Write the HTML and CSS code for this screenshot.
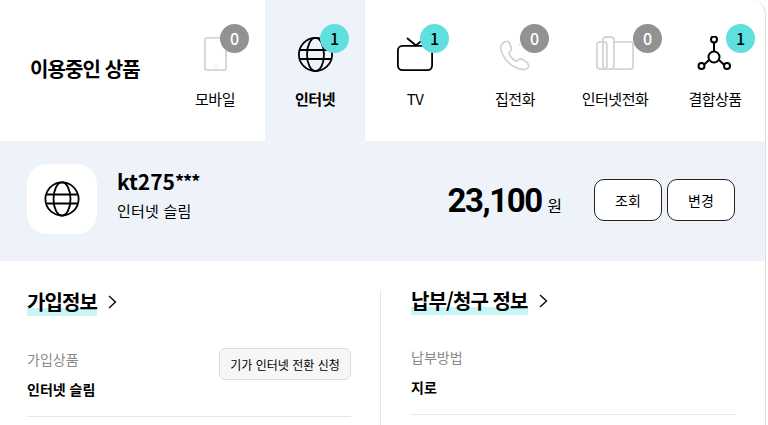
FILE: index.html
```html
<!DOCTYPE html>
<html lang="ko">
<head>
  <meta charset="UTF-8">
  <title>이용중인 상품</title>
  <link rel="stylesheet" href="styles.css">
</head>
<body>
  <div class="page">
    <div class="product-bar">
      <h2 class="bar-title">이용중인 상품</h2>
      <ul class="product-tabs">
        <li class="tab">
          <div class="tab-icon">
            <svg width="36" height="36" viewBox="0 0 36 36" fill="none" stroke="#d4d4d4" stroke-width="1.800"><rect x="7.900" y="1.900" width="21.200" height="32.200" rx="2"/><circle cx="19" cy="30" r=".8" fill="#bcdde6" stroke="none"/></svg>
            <span class="count">0</span>
          </div>
          <span class="tab-label">모바일</span>
        </li>
        <li class="tab active">
          <div class="tab-icon">
            <svg width="36" height="36" viewBox="0 0 36 36" fill="none" stroke="#000" stroke-width="1.800"><circle cx="18.500" cy="18.500" r="16.600"/><ellipse cx="18.500" cy="18.500" rx="8.500" ry="16.600"/><path d="M3 14h31M3 23h31"/></svg>
            <span class="count on">1</span>
          </div>
          <span class="tab-label">인터넷</span>
        </li>
        <li class="tab">
          <div class="tab-icon">
            <svg width="38" height="36" viewBox="0 0 38 36" fill="none" stroke="#000" stroke-width="1.800"><rect x="1.900" y="9.900" width="34.200" height="24.200" rx="4.500"/><path d="M11 2l9 7.500 7-6"/></svg>
            <span class="count on">1</span>
          </div>
          <span class="tab-label">TV</span>
        </li>
        <li class="tab">
          <div class="tab-icon">
            <svg width="36" height="36" viewBox="0 0 36 36" fill="none" stroke="#d4d4d4" stroke-width="1.800"><g transform="translate(3 4)"><path d="M8 1.500C6 1 4 2 2.500 3.500C0 6 .5 11 4 17C9 25 17 29.500 24 29.500C27 29.500 29 27.500 28.500 25C28 23 26 21.500 23.500 20C21 18.500 19 18.500 17.500 20.500C16.500 21.500 15 21 13 19C10.500 16.500 8.500 14 9 12.500C11 11 12 9.500 11 7.500C10.500 5 9.500 2.500 8 1.500Z"/><circle cx="19.500" cy="5" r=".8" fill="#d4d4d4" stroke="none"/></g></svg>
            <span class="count">0</span>
          </div>
          <span class="tab-label">집전화</span>
        </li>
        <li class="tab">
          <div class="tab-icon">
            <svg width="40" height="36" viewBox="0 0 40 36" fill="none" stroke="#d4d4d4" stroke-width="1.800"><rect x="1.900" y="5.900" width="10" height="27.200" rx="3"/><rect x="7.900" y="1" width="11" height="32.100" rx="3"/><path d="M18.900 5.900h16.200a3 3 0 0 1 3 3v21.200a3 3 0 0 1-3 3h-16.200"/></svg>
            <span class="count far">0</span>
          </div>
          <span class="tab-label">인터넷전화</span>
        </li>
        <li class="tab">
          <div class="tab-icon">
            <svg width="36" height="36" viewBox="0 0 36 36" fill="none" stroke="#000" stroke-width="2"><circle cx="17" cy="21" r="5.500"/><circle cx="17" cy="3.500" r="3"/><circle cx="4.500" cy="30" r="3"/><circle cx="30" cy="30" r="3"/><path d="M17 6.500v9M7.200 28.500l5.100-4.700M26.800 28.500l-5.100-4.700"/></svg>
            <span class="count on mid">1</span>
          </div>
          <span class="tab-label">결합상품</span>
        </li>
      </ul>
    </div>

    <div class="summary">
      <div class="summary-icon">
        <svg width="36" height="36" viewBox="0 0 36 36" fill="none" stroke="#000" stroke-width="1.800"><circle cx="18" cy="18" r="16.600"/><ellipse cx="18" cy="18" rx="8.500" ry="16.600"/><path d="M3 13.500h30M3 22.500h30"/></svg>
      </div>
      <div class="summary-name">
        <strong>kt275<i>***</i></strong>
        <span>인터넷 슬림</span>
      </div>
      <div class="summary-price"><b>23,100</b> <span>원</span></div>
      <div class="summary-btns">
        <button class="btn">조회</button>
        <button class="btn">변경</button>
      </div>
    </div>

    <div class="info">
      <section class="info-col left">
        <h3 class="info-title"><span>가입정보</span>
          <svg width="9" height="14" viewBox="0 0 9 14" fill="none" stroke="#000" stroke-width="1.300"><path d="M1 1l6.500 6L1 13"/></svg>
        </h3>
        <div class="info-row">
          <div>
            <div class="info-label">가입상품</div>
            <div class="info-value">인터넷 슬림</div>
          </div>
          <button class="small-btn">기가 인터넷 전환 신청</button>
        </div>
      </section>
      <section class="info-col right">
        <h3 class="info-title"><span>납부/청구 정보</span>
          <svg width="9" height="14" viewBox="0 0 9 14" fill="none" stroke="#000" stroke-width="1.300"><path d="M1 1l6.500 6L1 13"/></svg>
        </h3>
        <div class="info-row">
          <div>
            <div class="info-label">납부방법</div>
            <div class="info-value">지로</div>
          </div>
        </div>
      </section>
    </div>
  </div>
</body>
</html>
```

FILE: styles.css
```css
* {
  box-sizing: border-box;
}

html, body {
  height: 425px;
  overflow: hidden;
}

body {
  margin: 0;
  background-color: #ffffff;
  color: #000;
  font-family: "Noto Sans CJK KR", "Noto Sans", sans-serif;
}

.page {
  width: 766px;
  height: 425px;
  border-right: 1px solid #dedede;
  border-top-right-radius: 14px;
  overflow: hidden;
}

.product-bar {
  display: flex;
  height: 141px;
  padding-left: 30px;
}

.bar-title {
  margin: 0;
  width: 135px;
  font-size: 20px;
  font-weight: 700;
  line-height: 137px;
  letter-spacing: -0.9px;
  white-space: nowrap;
}

.product-tabs {
  display: flex;
  margin: 0;
  padding: 0;
  list-style: none;
}

.tab {
  display: flex;
  flex-direction: column;
  align-items: center;
  width: 100px;
  padding-top: 36px;
}

.tab.active {
  background-color: #eef3fa;
}

.tab.active .tab-label {
  font-weight: 700;
}

.tab-icon {
  position: relative;
  display: flex;
  justify-content: center;
  height: 36px;
  margin-bottom: 17px;
}

.count {
  position: absolute;
  left: calc(50% + 5px);
  top: -12px;
  width: 29px;
  height: 29px;
  border-radius: 50%;
  background-color: #929292;
  color: #fff;
  font-size: 16px;
  font-weight: 500;
  line-height: 28px;
  text-align: center;
}

.count.on {
  background-color: #5ee0de;
  color: #000;
}

.count.far {
  left: calc(50% + 18px);
}

.count.mid {
  left: calc(50% + 11px);
}

.tab-label {
  font-size: 15px;
  line-height: 20px;
  letter-spacing: -0.5px;
  white-space: nowrap;
}

.summary {
  display: flex;
  align-items: center;
  height: 120px;
  padding: 0 30px 4px 27px;
  background-color: #eef3fa;
}

.summary-icon {
  display: flex;
  align-items: center;
  justify-content: center;
  width: 70px;
  height: 70px;
  margin-right: 20px;
  border-radius: 20px;
  background-color: #fff;
}

.summary-name {
  display: flex;
  flex-direction: column;
  flex: 1;
}

.summary-name strong {
  font-size: 21px;
  font-weight: 700;
  line-height: 24px;
}

.summary-name strong i {
  font-size: 18px;
  font-style: normal;
  letter-spacing: -1px;
  vertical-align: 1px;
}

.summary-name span {
  font-size: 15px;
  line-height: 36px;
  letter-spacing: 0.2px;
}

.summary-price {
  margin: 2px 32px 0 0;
}

.summary-price b {
  font-family: "Roboto", sans-serif;
  font-size: 33px;
  font-weight: 700;
  letter-spacing: -1.4px;
}

.summary-price span {
  margin-left: 1px;
  font-size: 16px;
}

.summary-btns {
  display: flex;
  gap: 5px;
  margin-top: 2px;
}

.btn {
  width: 68px;
  height: 42px;
  border: 1px solid #222;
  border-radius: 10px;
  background-color: #fff;
  color: #000;
  font-family: inherit;
  font-size: 14px;
}

.info {
  display: flex;
  padding-top: 29px;
}

.info-col {
  height: 135px;
  padding: 0 30px;
}

.info-col.left {
  width: 381px;
  padding: 0 29px 0 27px;
  border-right: 1px solid #e6e6e6;
}

.info-col.right {
  width: 384px;
}

.info-title {
  display: flex;
  align-items: center;
  gap: 11px;
  margin: -2px 0 33px;
  font-size: 20px;
  font-weight: 700;
  line-height: 28px;
  letter-spacing: -0.9px;
}

.right .info-title {
  margin: -3px 0 32px;
}

.info-title span {
  background: linear-gradient(transparent 72%, #c9f5f4 72%);
}

.info-row {
  display: flex;
  justify-content: space-between;
  height: 68px;
  border-bottom: 1px solid #e6e6e6;
}

.info-label {
  margin-bottom: 10px;
  color: #8a8a8a;
  font-size: 14px;
  line-height: 20px;
}

.info-value {
  font-size: 14px;
  font-weight: 700;
  line-height: 20px;
}

.small-btn {
  width: 132px;
  height: 32px;
  margin-top: -1px;
  padding: 0;
  border: 1px solid #dcdcdc;
  border-radius: 6px;
  background-color: #f6f6f6;
  color: #000;
  font-family: inherit;
  font-size: 12px;
}
```
